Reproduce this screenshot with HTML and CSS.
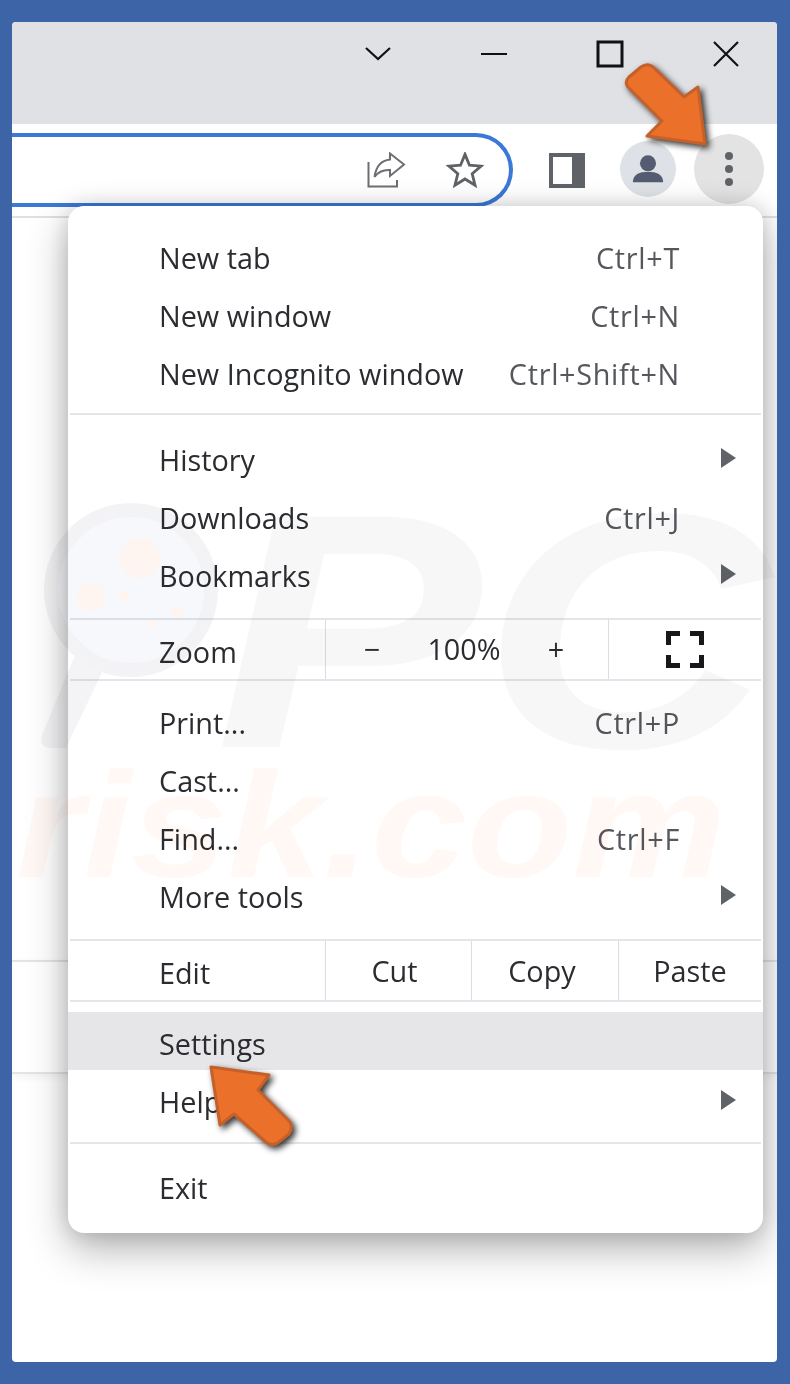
FILE: index.html
```html
<!DOCTYPE html>
<html lang="en">
<head>
    <meta charset="UTF-8">
    <meta name="viewport" content="width=device-width, initial-scale=1.0">
    <title>Chrome menu - Settings</title>
    <link rel="stylesheet" href="styles.css">
</head>
<body>
    <div class="window">
        <div class="titlebar">
            <svg class="win-icon" viewBox="0 0 24 24"><path d="M0 6 L12 17 L24 6" /></svg>
            <svg class="win-icon" viewBox="0 0 24 24"><path d="M-1 12 H25" /></svg>
            <svg class="win-icon win-max" viewBox="0 0 24 24"><rect x="0" y="0" width="24" height="24" /></svg>
            <svg class="win-icon" viewBox="0 0 24 24"><path d="M0 0 L24 24 M24 0 L0 24" /></svg>
        </div>

        <div class="toolbar">
            <div class="omnibox">
                <svg class="share-icon" viewBox="0 0 39 36"><path d="M23 1.5 L37 12.5 L23 24 V18 C15 17.500 11 20 7.500 25 C9 14 14 8.500 23 7.500 Z" /><path d="M1.500 10 V34.500 H30 V28" /></svg>
                <svg class="star-icon" viewBox="-2 -2 40 38"><path d="M18 .5 L22.700 12 L35.100 12.900 L25.600 21 L28.600 33.100 L18 26.500 L7.400 33.100 L10.400 21 L.9 12.900 L13.300 12 Z" /></svg>
            </div>
            <div class="panel-icon"><span class="panel-blank"></span></div>
            <div class="avatar">
                <svg viewBox="0 0 36 36"><circle cx="18" cy="12" r="8.500" /><path d="M2 32 C2 24 9 21 18 21 C27 21 34 24 34 32 Z" /></svg>
            </div>
            <div class="dots-button">
                <span class="dot"></span>
                <span class="dot"></span>
                <span class="dot"></span>
            </div>
        </div>

        <div class="page">
            <div class="page-card"></div>
        </div>

        <div class="menu">
            <div class="item"><span>New tab</span><span class="shortcut">Ctrl+T</span></div>
            <div class="item"><span>New window</span><span class="shortcut">Ctrl+N</span></div>
            <div class="item"><span>New Incognito window</span><span class="shortcut">Ctrl+Shift+N</span></div>
            <div class="sep sep-a"></div>
            <div class="item sub"><span>History</span><span class="caret"></span></div>
            <div class="item"><span>Downloads</span><span class="shortcut">Ctrl+J</span></div>
            <div class="item sub"><span>Bookmarks</span><span class="caret"></span></div>
            <div class="sep sep-b"></div>
            <div class="cells zoom-row">
                <span class="cell-label">Zoom</span>
                <div class="zoom-controls"><span>−</span><span>100%</span><span>+</span></div>
                <div class="cell">
                    <svg class="full-icon" viewBox="0 0 38 37"><path d="M2.500 14 V2.500 H14 M24 2.500 H35.500 V14 M35.500 24 V34.500 H24 M14 34.500 H2.500 V24" /></svg>
                </div>
            </div>
            <div class="sep sep-c"></div>
            <div class="item"><span>Print...</span><span class="shortcut">Ctrl+P</span></div>
            <div class="item"><span>Cast...</span></div>
            <div class="item"><span>Find...</span><span class="shortcut">Ctrl+F</span></div>
            <div class="item sub"><span>More tools</span><span class="caret"></span></div>
            <div class="sep sep-b"></div>
            <div class="cells edit-row">
                <span class="cell-label">Edit</span>
                <div class="cell cell-cut">Cut</div>
                <div class="cell cell-copy">Copy</div>
                <div class="cell">Paste</div>
            </div>
            <div class="sep sep-d"></div>
            <div class="item low hover"><span>Settings</span></div>
            <div class="item low sub"><span>Help</span><span class="caret"></span></div>
            <div class="sep sep-e"></div>
            <div class="item"><span>Exit</span></div>
        </div>

        <!-- watermark sits over the whole shot -->
        <svg class="watermark" viewBox="0 0 790 1384">
            <path class="wm-gray" d="M75 655 L42 735 Q38 748 52 748 L66 748 L108 660 Z" />
            <circle class="wm-glass" cx="131" cy="590" r="80" />
            <circle class="wm-dot" cx="140" cy="558" r="20" />
            <circle class="wm-dot" cx="91" cy="597" r="14" />
            <circle class="wm-dot" cx="124" cy="596" r="6" />
            <circle class="wm-dot" cx="177" cy="613" r="6" />
            <circle class="wm-dot" cx="153" cy="624" r="4" />
            <text class="wm-pc" x="215" y="747" textLength="555" lengthAdjust="spacingAndGlyphs">PC</text>
            <text class="wm-risk" x="16" y="877" textLength="710" lengthAdjust="spacingAndGlyphs">risk.com</text>
        </svg>

        <svg class="arrow arrow-top" viewBox="0 0 100 100"><path d="M22 6 Q29 1 35 7 L65 36 L79 26 L86 83 L28 75 L43 60 L9 26 Q5 21 10 16 Z" /></svg>
        <svg class="arrow arrow-bottom" viewBox="0 0 100 100"><path d="M10 5 L68 13 L57 28 L89 60 Q92 66 88 72 L78 80 Q71 85 65 80 L33 52 L19 63 Z" /></svg>
    </div>
</body>
</html>
```

FILE: styles.css
```css
html, body {
    margin: 0;
    padding: 0;
}

body {
    width: 790px;
    height: 1384px;
    box-sizing: border-box;
    padding: 22px 13px 22px 12px;
    background-color: #3c64a7;
    font-family: "Open Sans", "Noto Sans", sans-serif;
    color: #2b2c30;
    overflow: hidden;
}

.window {
    position: relative;
    height: 1340px;
    background-color: white;
    border-radius: 4px;
    overflow: hidden;
}

/* top bars */
.titlebar {
    height: 102px;
    box-sizing: border-box;
    padding: 20px 39px 0 0;
    background-color: #dfe1e5;
    display: flex;
    justify-content: flex-end;
    gap: 92px;
}

.win-icon {
    width: 24px;
    height: 24px;
    overflow: visible;
    fill: none;
    stroke: #111;
    stroke-width: 2.2;
}

.win-max {
    stroke-width: 3;
}

.toolbar {
    height: 92px;
    display: flex;
    align-items: center;
    border-bottom: 2px solid #dfe0e3;
}

.omnibox {
    width: 501px;
    height: 74px;
    box-sizing: border-box;
    border: 4px solid #3b78d8;
    border-left: none;
    border-radius: 0 37px 37px 0;
    display: flex;
    justify-content: flex-end;
    align-items: center;
    gap: 40px;
    padding-right: 25px;
}

.share-icon {
    width: 39px;
    height: 36px;
    fill: none;
    stroke: #6c6e72;
    stroke-width: 2;
}

.star-icon {
    width: 38px;
    height: 36px;
    fill: none;
    stroke: #5f6266;
    stroke-width: 3;
}

.panel-icon {
    width: 36px;
    height: 35px;
    margin-left: 36px;
    box-sizing: border-box;
    padding: 4px 13px 4px 4px;
    background-color: #5f6368;
}

.panel-blank {
    display: block;
    height: 100%;
    background-color: white;
}

.avatar {
    width: 56px;
    height: 56px;
    margin-left: 35px;
    margin-top: -2px;
    border-radius: 50%;
    background-color: #dee1e6;
    display: flex;
    align-items: center;
    justify-content: center;
}

.avatar svg {
    width: 34px;
    height: 34px;
    fill: #535c70;
}

.dots-button {
    width: 70px;
    height: 70px;
    margin-left: 18px;
    margin-top: -2px;
    border-radius: 50%;
    background-color: #e3e3e4;
    display: flex;
    flex-direction: column;
    align-items: center;
    justify-content: center;
    gap: 5px;
}

.dot {
    width: 8px;
    height: 8px;
    border-radius: 50%;
    background-color: #5f6368;
}

/* page behind the menu */
.page {
    padding-top: 742px;
}

.page-card {
    height: 110px;
    border-top: 2px solid #e4e4e6;
    border-bottom: 2px solid #e4e4e6;
    box-shadow: 0 3px 8px rgba(0, 0, 0, 0.06);
}

/* chrome menu */
.menu {
    position: absolute;
    left: 56px;
    top: 184px;
    width: 695px;
    height: 1027px;
    box-sizing: border-box;
    padding-top: 23px;
    background-color: white;
    border-radius: 16px;
    box-shadow: 0 16px 40px rgba(0, 0, 0, 0.3), 0 0 20px rgba(0, 0, 0, 0.14);
    font-size: 28.8px;
    line-height: 58px;
}

.item {
    height: 58px;
    padding: 0 83px 0 91px;
    display: flex;
    justify-content: space-between;
    align-items: center;
}

.item.sub {
    padding-right: 27px;
}

.item.low span:first-child {
    padding-top: 6px;
}

.item.hover {
    background-color: #e6e6e8;
}

.shortcut {
    color: #55575c;
    letter-spacing: 0.7px;
}

.caret {
    width: 0;
    height: 0;
    margin-top: -4px;
    border-left: 15px solid #5f6368;
    border-top: 10px solid transparent;
    border-bottom: 10px solid transparent;
}

.item.low .caret {
    margin-top: 2px;
}

.sep {
    height: 2px;
    margin: 0 2px;
    background-color: #e4e5ea;
}

.sep-a {
    margin-top: 10px;
    margin-bottom: 16px;
}

.sep-b {
    margin-top: 13px;
}

.sep-c {
    margin-bottom: 13px;
}

.sep-d {
    margin-bottom: 10px;
}

.sep-e {
    margin-top: 14px;
    margin-bottom: 15px;
}

.cells {
    height: 59px;
    margin: 0 2px;
    display: grid;
    align-items: stretch;
}

.zoom-row {
    grid-template-columns: 255px 283px 153px;
}

.edit-row {
    grid-template-columns: 255px 146px 147px 143px;
}

.cell-label {
    padding: 3px 0 0 89px;
}

.cell {
    border-left: 1px solid #dcdde2;
    display: flex;
    align-items: center;
    justify-content: center;
    margin-bottom: 2px;
}

.cell-cut {
    padding-right: 8px;
}

.cell-copy {
    padding-right: 6px;
}

.zoom-controls {
    border-left: 1px solid #dcdde2;
    box-sizing: border-box;
    padding-right: 6px;
    margin-bottom: 2px;
    display: grid;
    grid-template-columns: 1fr 1fr 1fr;
    text-align: center;
}

.full-icon {
    width: 38px;
    height: 37px;
    fill: none;
    stroke: #17181a;
    stroke-width: 5;
}

/* overlays */
.watermark {
    position: absolute;
    left: -12px;
    top: -22px;
    width: 790px;
    height: 1384px;
    mix-blend-mode: multiply;
    pointer-events: none;
}

.wm-gray {
    fill: #f4f4f6;
}

.wm-glass {
    fill: #f6f8fc;
    stroke: #f3f3f5;
    stroke-width: 14;
}

.wm-dot {
    fill: #fef4f0;
}

.wm-pc {
    font-family: "Liberation Sans", sans-serif;
    font-weight: bold;
    font-style: italic;
    font-size: 335px;
    fill: #f7f7f8;
}

.wm-risk {
    font-family: "Liberation Sans", sans-serif;
    font-weight: bold;
    font-style: italic;
    font-size: 150px;
    fill: #fff8f5;
}

.arrow {
    position: absolute;
    width: 100px;
    height: 100px;
    overflow: visible;
    fill: #eb702a;
    stroke: #c5602a;
    stroke-width: 3;
    stroke-linejoin: round;
    filter: drop-shadow(3px 3px 3px rgba(0, 0, 0, 0.8));
}

.arrow-top {
    left: 607px;
    top: 39px;
}

.arrow-bottom {
    left: 189px;
    top: 1040px;
}
```
